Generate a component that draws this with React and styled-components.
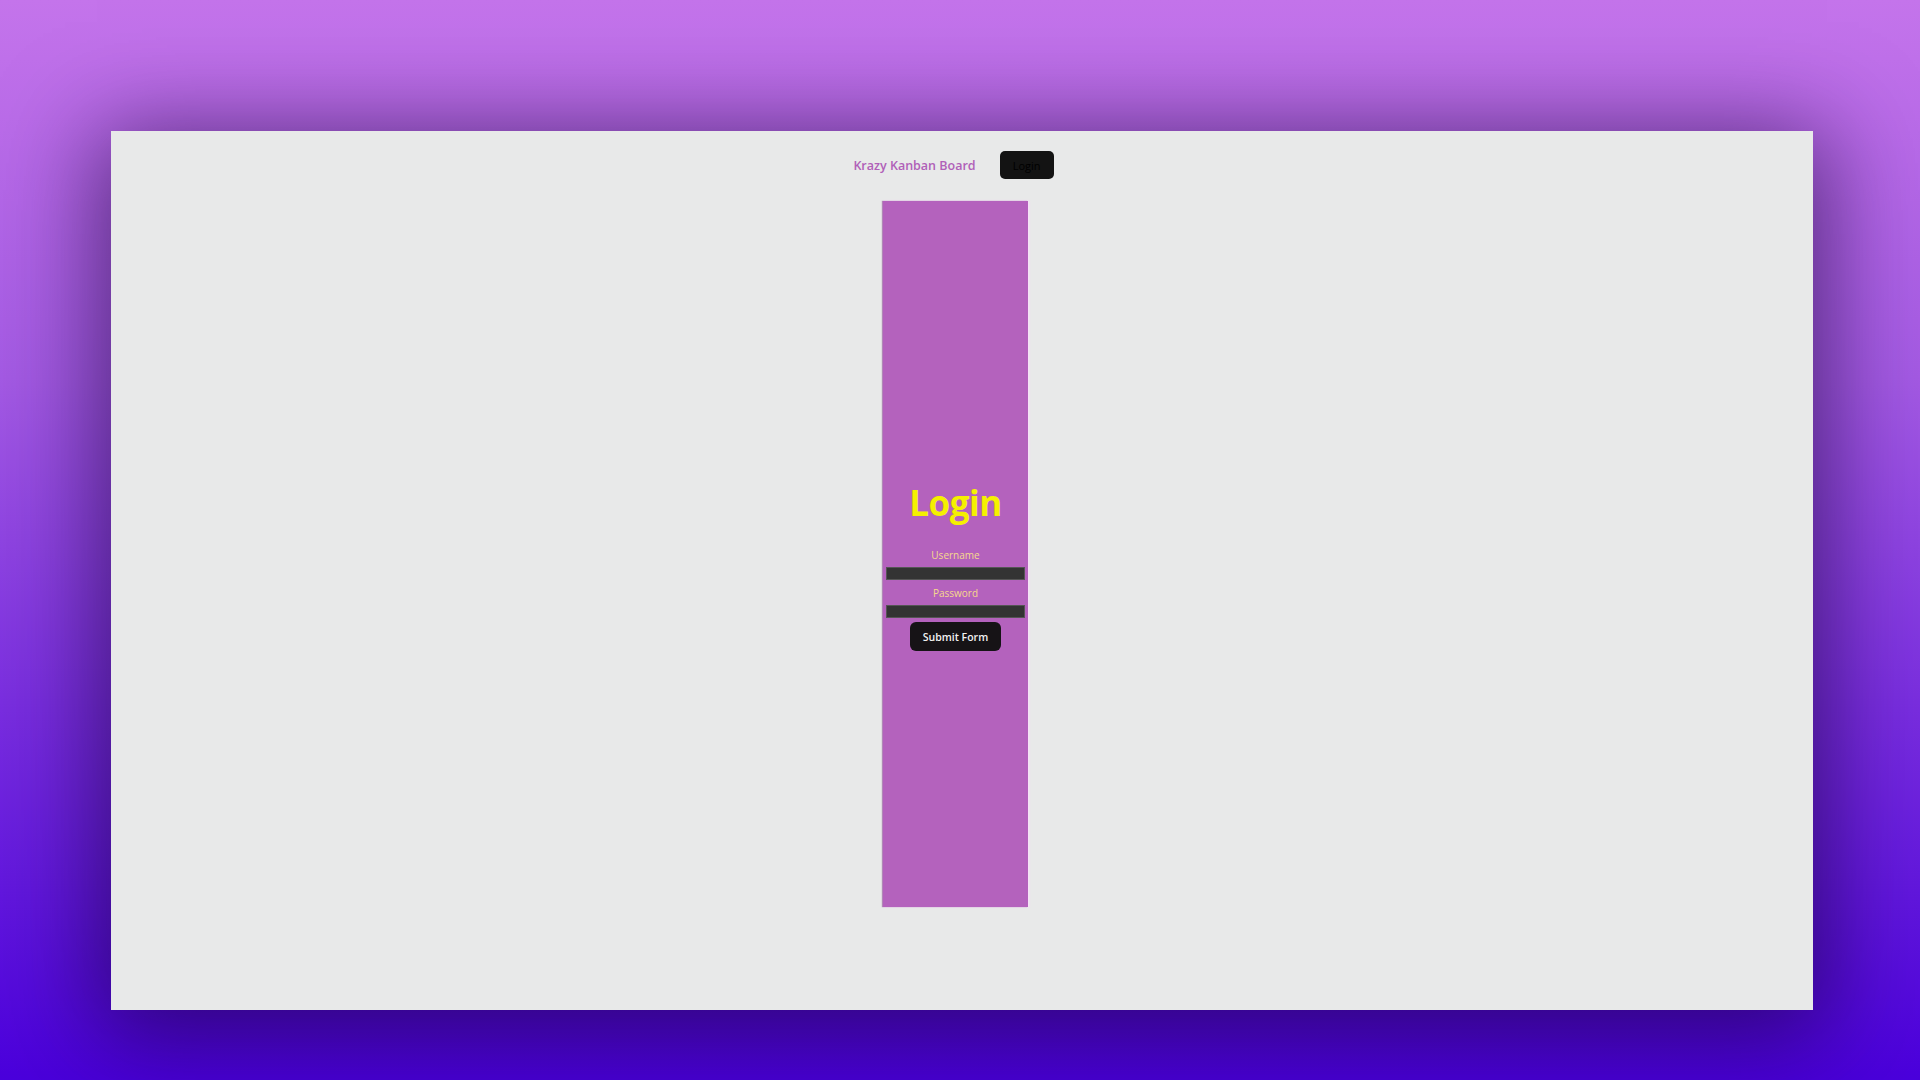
import React from "react";
import styled, { createGlobalStyle } from "styled-components";

const GlobalStyle = createGlobalStyle`
  html, body {
    margin: 0;
    padding: 0;
  }
  body {
    font-family: "Open Sans", "Noto Sans", sans-serif;
  }
`;

const Backdrop = styled.div`
  width: 1920px;
  height: 1080px;
  box-sizing: border-box;
  padding: 131px 107px 70px 111px;
  background: linear-gradient(180deg, #c474eb 0%, #a45ae4 35%, #7a2ee0 65%, #4a00dc 100%);
  overflow: hidden;
`;

const Window = styled.div`
  width: 1702px;
  height: 879px;
  background: #e8e9e9;
  box-shadow: 0 14px 90px 14px rgba(20, 0, 50, 0.58);
  display: flex;
  flex-direction: column;
  align-items: center;
  padding: 20px 14px 0 0;
  box-sizing: border-box;
`;

const Nav = styled.nav`
  display: flex;
  align-items: center;
  gap: 24px;
  height: 28px;
  margin-right: 3px;
`;

const Brand = styled.span`
  color: #b060b8;
  font-size: 12.5px;
  font-weight: 600;
`;

const NavButton = styled.button`
  width: 54px;
  height: 28px;
  border: none;
  border-radius: 5px;
  background: #131313;
  color: #000;
  font-family: inherit;
  font-size: 11px;
  padding: 0;
`;

const Panel = styled.div`
  margin-top: 22px;
  margin-left: 1px;
  width: 145px;
  height: 706px;
  background: #b462bd;
  box-shadow: -1px 0 1px rgba(120, 40, 130, 0.5), 1px 0 2px rgba(255, 220, 255, 0.9);
  display: flex;
  flex-direction: column;
  align-items: center;
  padding-top: 280px;
  box-sizing: border-box;
`;

const Title = styled.h1`
  margin: 0;
  color: #f5f000;
  font-size: 35px;
  font-weight: 700;
  line-height: 44px;
  letter-spacing: -0.5px;
`;

const Form = styled.form`
  display: flex;
  flex-direction: column;
  align-items: center;
  width: 100%;
  margin-top: 23px;
`;

const Label = styled.label`
  color: #f6d98c;
  font-size: 10px;
  line-height: 14px;
  margin-bottom: 5px;
`;

const Input = styled.input`
  width: 139px;
  height: 13px;
  box-sizing: border-box;
  background: #333333;
  border: 1px solid #555;
  padding: 0;
  margin-bottom: ${(p) => p.$gap}px;
`;

const Submit = styled.button`
  width: 91px;
  height: 29px;
  border: none;
  border-radius: 6px;
  background: #161316;
  color: #f2f2f2;
  font-family: inherit;
  font-size: 10.5px;
  font-weight: 600;
  padding: 0;
`;

export default function App() {
  return (
    <>
      <GlobalStyle />
      <Backdrop>
        <Window>
          <Nav>
            <Brand>Krazy Kanban Board</Brand>
            <NavButton>Login</NavButton>
          </Nav>
          <Panel>
            <Title>Login</Title>
            <Form onSubmit={(e) => e.preventDefault()}>
              <Label htmlFor="username">Username</Label>
              <Input id="username" type="text" $gap={6} />
              <Label htmlFor="password">Password</Label>
              <Input id="password" type="password" $gap={4} />
              <Submit type="submit">Submit Form</Submit>
            </Form>
          </Panel>
        </Window>
      </Backdrop>
    </>
  );
}
